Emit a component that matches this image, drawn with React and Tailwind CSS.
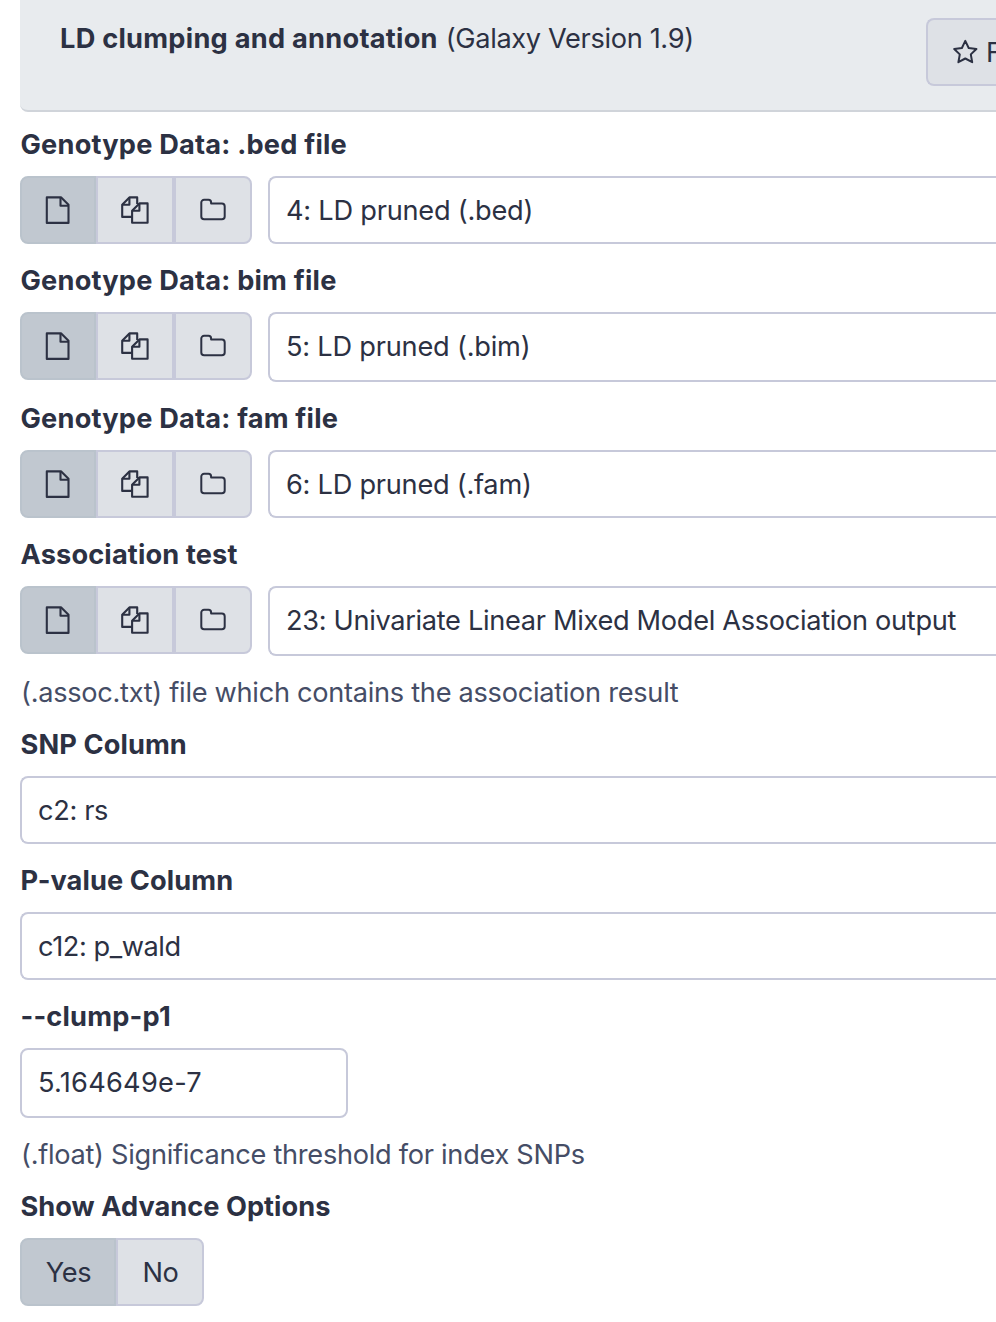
function FileIcon() {
  return (
    <svg width="28" height="30" viewBox="0 0 28 30" fill="none" stroke="#2c3143" strokeWidth="2.1" strokeLinejoin="round">
      <path d="M2.8 2.4H17.2L24.5 9.7V27.9H2.8Z" />
      <path d="M16.5 2.4V10.7H24.5" />
    </svg>
  );
}

function CopyIcon() {
  return (
    <svg width="30" height="30" viewBox="0 0 30 30" fill="none" stroke="#2c3143" strokeWidth="2.1" strokeLinejoin="round">
      <path d="M12 21.9H2.2V9.8L9.4 2.4H17.2V9" />
      <path d="M9.4 2.4V9.8H2.2" />
      <path d="M12.1 15.7L19.4 8.4H27.6V27.8H12.1Z" />
      <path d="M19.4 8.4V15.7H12.1" />
    </svg>
  );
}

function FolderIcon() {
  return (
    <svg width="28" height="24" viewBox="0 0 28 24" fill="none" stroke="#2c3143" strokeWidth="2" strokeLinejoin="round">
      <path d="M2.3 4.6a2.8 2.8 0 0 1 2.8-2.8h4.4a2.6 2.6 0 0 1 2.6 2.6v1.2h10.8a2.8 2.8 0 0 1 2.8 2.8v10.1a2.8 2.8 0 0 1-2.8 2.8H5.1a2.8 2.8 0 0 1-2.8-2.8Z" />
    </svg>
  );
}

function StarIcon() {
  return (
    <svg width="26" height="26" viewBox="0 0 26 26" fill="none" stroke="#2c3143" strokeWidth="2" strokeLinejoin="round">
      <path d="M13.3 1.9L16.7 9L24.4 10L18.8 15.4L20.2 23.2L13.3 19.5L6.4 23.2L7.8 15.4L2.2 10L9.9 9Z" />
    </svg>
  );
}

function Label({ children, className = "mt-[6px] tracking-[0.2px]" }) {
  return <label className={`flex h-[62px] items-center pl-[0.5px] text-[27.2px] font-bold whitespace-nowrap ${className}`}>{children}</label>;
}

function Help({ children }) {
  return <p className="mt-[16px] flex h-[42px] items-center pl-px text-[27.2px] tracking-[-0.29px] whitespace-nowrap text-[#454d66]">{children}</p>;
}

function Field({ children, className = "h-[68px] pt-0.5 tracking-[-0.35px]" }) {
  return (
    <div className={`flex flex-1 items-center rounded-l-[8px] border-2 border-r-0 border-[#c7c9da] bg-white pl-4 whitespace-nowrap ${className}`}>
      {children}
    </div>
  );
}

function DataRow({ value, fieldClass }) {
  return (
    <div className="flex items-start gap-4">
      <div className="flex h-[68px]">
        <button className="flex w-[76px] items-center justify-center rounded-l-[8px] border-2 border-[#bac3cc] bg-[#c1c8d0]">
          <FileIcon />
        </button>
        <button className="flex w-[78px] items-center justify-center border-2 border-[#c7c9da] bg-[#dee1e6]">
          <CopyIcon />
        </button>
        <button className="flex w-[78px] items-center justify-center rounded-r-[8px] border-2 border-[#c7c9da] bg-[#dee1e6]">
          <FolderIcon />
        </button>
      </div>
      <Field className={fieldClass}>{value}</Field>
    </div>
  );
}

export default function App() {
  return (
    <main className="h-[1322px] w-full overflow-hidden bg-white pl-5 font-['Inter',sans-serif] text-[27.2px] text-[#2c3143]">
      <header className="flex h-[112px] items-start justify-between rounded-bl-[8px] border-b-2 border-[#d0d4da] bg-[#e8ebee] pl-10">
        <h1 className="flex h-[79px] items-center gap-2 whitespace-nowrap">
          <b className="font-bold tracking-[0.26px]">LD clumping and annotation</b>
          <span className="tracking-[-0.35px]">(Galaxy Version 1.9)</span>
        </h1>
        <button className="mt-[18px] flex h-[68px] w-[70px] items-center gap-2 overflow-hidden rounded-l-[8px] border-2 border-r-0 border-[#c7c9da] bg-[#dee1e6] pl-6">
          <span className="shrink-0"><StarIcon /></span>
          <span className="pt-0.5">Favorite</span>
        </button>
      </header>
      <Label className="mt-[2px] tracking-[0.2px]">Genotype Data: .bed file</Label>
      <DataRow value="4: LD pruned (.bed)" fieldClass="h-[68px] pt-0.5 tracking-[-0.24px]" />
      <Label>Genotype Data: bim file</Label>
      <DataRow value="5: LD pruned (.bim)" fieldClass="h-[70px] tracking-[-0.22px]" />
      <Label>Genotype Data: fam file</Label>
      <DataRow value="6: LD pruned (.fam)" fieldClass="h-[68px] pt-0.5 tracking-[-0.26px]" />
      <Label className="mt-[6px] tracking-[0.15px]">Association test</Label>
      <DataRow value="23: Univariate Linear Mixed Model Association output" fieldClass="h-[70px] tracking-[-0.32px]" />
      <Help>(.assoc.txt) file which contains the association result</Help>
      <Label className="tracking-[0.1px]">SNP Column</Label>
      <Field>c2: rs</Field>
      <Label className="mt-[6px] tracking-[0.1px]">P-value Column</Label>
      <Field className="h-[68px] pt-0.5 tracking-[-0.45px]">c12: p_wald</Field>
      <Label>--clump-p1</Label>
      <div className="flex h-[70px] w-[328px] items-center rounded-[8px] border-2 border-[#c7c9da] pl-4 tracking-[0.25px]">5.164649e-7</div>
      <Help>(.float) Significance threshold for index SNPs</Help>
      <Label className="tracking-[0.03px]">Show Advance Options</Label>
      <div className="flex h-[68px]">
        <button className="w-[96px] rounded-l-[8px] border-2 border-[#bac3cc] bg-[#c1c8d0] pt-0.5 pl-px tracking-[-0.3px]">Yes</button>
        <button className="w-[88px] rounded-r-[8px] border-2 border-[#c7c9da] bg-[#dee1e6] pt-0.5 pl-px tracking-[-0.3px]">No</button>
      </div>
    </main>
  );
}
